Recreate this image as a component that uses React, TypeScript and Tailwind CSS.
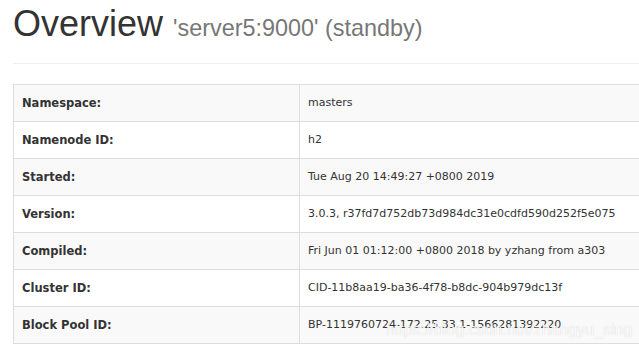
const rows: [string, string][] = [
  ['Namespace:', 'masters'],
  ['Namenode ID:', 'h2'],
  ['Started:', 'Tue Aug 20 14:49:27 +0800 2019'],
  ['Version:', '3.0.3, r37fd7d752db73d984dc31e0cdfd590d252f5e075'],
  ['Compiled:', 'Fri Jun 01 01:12:00 +0800 2018 by yzhang from a303'],
  ['Cluster ID:', 'CID-11b8aa19-ba36-4f78-b8dc-904b979dc13f'],
  ['Block Pool ID:', 'BP-1119760724-172.25.33.1-1566281392220'],
];

export default function App() {
  return (
    <div className="relative h-[347px] w-[639px] overflow-hidden bg-white pl-[13px] text-[#333]">
      <div className="mb-5 border-b border-[#eee] pb-[9px]">
        <h1 className="mt-[4px] mb-[10px] h-[40px] font-['Liberation_Sans',Arial,sans-serif] text-[36px] leading-[40px] font-medium whitespace-nowrap">
          Overview{' '}
          <small className="text-[23.4px] leading-none font-normal text-[#777]">'server5:9000' (standby)</small>
        </h1>
      </div>

      <table className="w-[680px] border-collapse font-['DejaVu_Sans',Verdana,sans-serif] text-[11px]">
        <tbody>
          {rows.map(([label, value], i) => (
            <tr key={label} className={i % 2 === 0 ? 'bg-[#f9f9f9]' : 'bg-white'}>
              <th className="h-[37px] w-[286px] border border-[#ddd] px-2 py-0 text-left text-[11.5px] leading-5 font-bold">
                {label}
              </th>
              <td className="h-[37px] border border-[#ddd] px-2 py-0 leading-5 whitespace-nowrap">{value}</td>
            </tr>
          ))}
        </tbody>
      </table>

      <div className="absolute top-[320px] left-[386px] font-['Liberation_Sans',Arial,sans-serif] text-[16px] leading-5 whitespace-nowrap text-white/90 [text-shadow:0_0_1px_rgba(0,0,0,0.2)]">
        https://blog.csdn.net/zhangyu_sing
      </div>
    </div>
  );
}
